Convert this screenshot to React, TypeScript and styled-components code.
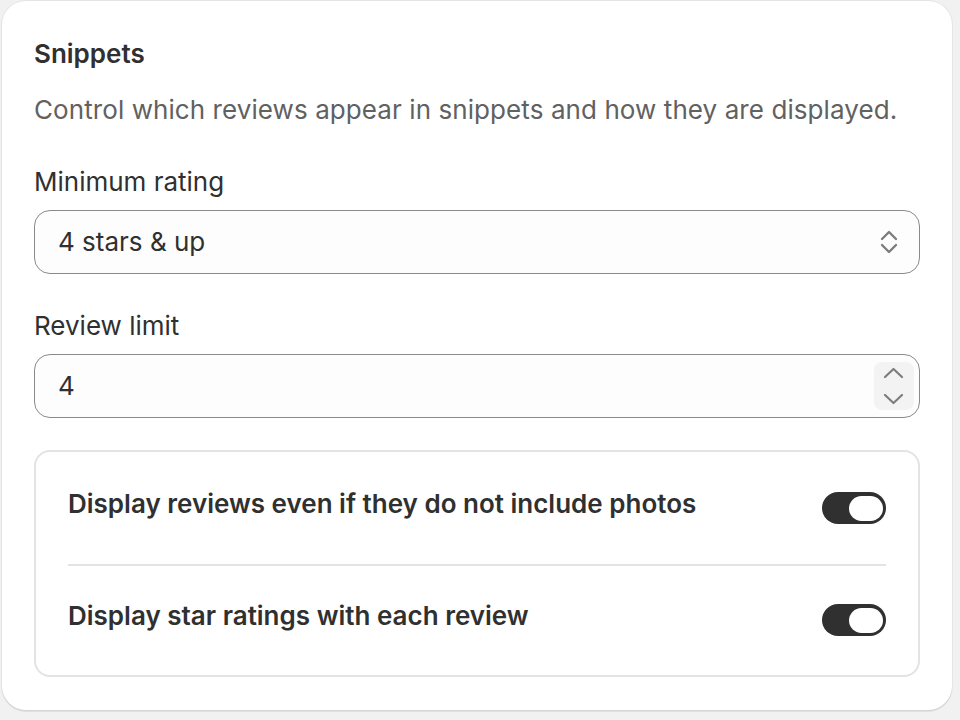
import React from 'react';
import styled, { createGlobalStyle } from 'styled-components';

const GlobalStyle = createGlobalStyle`
  html, body { margin: 0; padding: 0; background: #f1f1f1; }
  body {
    font-family: Inter, "Noto Sans", sans-serif;
    color: #303030;
    -webkit-font-smoothing: antialiased;
  }
  * { box-sizing: border-box; }
`;

const Page = styled.div`
  padding: 1px 8px 10px 2px;
`;

const Card = styled.section`
  width: 950px;
  height: 709px;
  background: #ffffff;
  border-radius: 24px;
  box-shadow: 0 2px 0 0 rgba(26, 26, 26, 0.08), 0 0 0 1px rgba(26, 26, 26, 0.05);
  padding: 33px 32px 32px 32px;
  display: flex;
  flex-direction: column;
`;

const Heading = styled.h2`
  margin: 0;
  font-size: 26px;
  line-height: 40px;
  font-weight: 600;
  color: #303030;
`;

const Description = styled.p`
  margin: 16px 0 0;
  font-size: 26px;
  line-height: 40px;
  font-weight: 400;
  letter-spacing: 0.08px;
  color: #616161;
`;

const Field = styled.div`
  margin-top: 32px;
  display: flex;
  flex-direction: column;
  gap: 8px;
`;

const Label = styled.label`
  font-size: 26px;
  line-height: 40px;
  color: #303030;
`;

const Control = styled.div<{ $padRight: number }>`
  height: 64px;
  border: 1.5px solid #8a8a8a;
  border-radius: 16px;
  background: #fdfdfd;
  display: flex;
  align-items: center;
  padding: 0 ${(p) => p.$padRight}px 0 23px;
`;

const Value = styled.span`
  flex: 1;
  font-size: 26px;
  line-height: 40px;
  color: #303030;
`;

const Spinner = styled.div`
  width: 40px;
  height: 48px;
  border-radius: 8px;
  background: #f3f3f3;
  display: flex;
`;

const OptionsCard = styled.div`
  margin-top: 32px;
  border: 2px solid #e3e3e3;
  border-radius: 16px;
  padding: 32px 32px 39px;
  display: flex;
  flex-direction: column;
`;

const Row = styled.div<{ $gapTop: number }>`
  margin-top: ${(p) => p.$gapTop}px;
  display: flex;
  justify-content: space-between;
  align-items: flex-start;
`;

const RowText = styled.span`
  font-size: 26px;
  line-height: 40px;
  font-weight: 600;
  color: #303030;
`;

const Divider = styled.hr`
  margin: 40px 0 0;
  border: none;
  height: 2px;
  background: #e3e3e3;
`;

const Toggle = styled.div`
  margin-top: 8px;
  width: 64px;
  height: 32px;
  border-radius: 16px;
  background: #303030;
  display: flex;
  align-items: center;
  justify-content: flex-end;
  padding: 0 3.5px;
`;

const Knob = styled.span`
  width: 34px;
  height: 25px;
  border-radius: 13px;
  background: #ffffff;
`;

const SelectIcon = () => (
  <svg width="18" height="26" viewBox="0 0 18 26" fill="none">
    <path d="M2 10 L9 3 L16 10" stroke="#7d7d7d" strokeWidth="2.4" strokeLinecap="round" strokeLinejoin="round" />
    <path d="M2 16 L9 23 L16 16" stroke="#7d7d7d" strokeWidth="2.4" strokeLinecap="round" strokeLinejoin="round" />
  </svg>
);

const SpinnerIcon = () => (
  <svg width="40" height="48" viewBox="0 0 40 48" fill="none">
    <path d="M11 15 L19.5 7 L28 15" stroke="#7d7d7d" strokeWidth="2.2" strokeLinecap="round" strokeLinejoin="round" />
    <path d="M11 33 L19.5 41 L28 33" stroke="#7d7d7d" strokeWidth="2.2" strokeLinecap="round" strokeLinejoin="round" />
  </svg>
);

export default function App() {
  return (
    <>
      <GlobalStyle />
      <Page>
        <Card>
          <Heading>Snippets</Heading>
          <Description>Control which reviews appear in snippets and how they are displayed.</Description>
          <Field>
            <Label>Minimum rating</Label>
            <Control $padRight={21.5}>
              <Value>4 stars &amp; up</Value>
              <SelectIcon />
            </Control>
          </Field>
          <Field>
            <Label>Review limit</Label>
            <Control $padRight={5.5}>
              <Value>4</Value>
              <Spinner>
                <SpinnerIcon />
              </Spinner>
            </Control>
          </Field>
          <OptionsCard>
            <Row $gapTop={0}>
              <RowText>Display reviews even if they do not include photos</RowText>
              <Toggle>
                <Knob />
              </Toggle>
            </Row>
            <Divider />
            <Row $gapTop={30}>
              <RowText>Display star ratings with each review</RowText>
              <Toggle>
                <Knob />
              </Toggle>
            </Row>
          </OptionsCard>
        </Card>
      </Page>
    </>
  );
}
